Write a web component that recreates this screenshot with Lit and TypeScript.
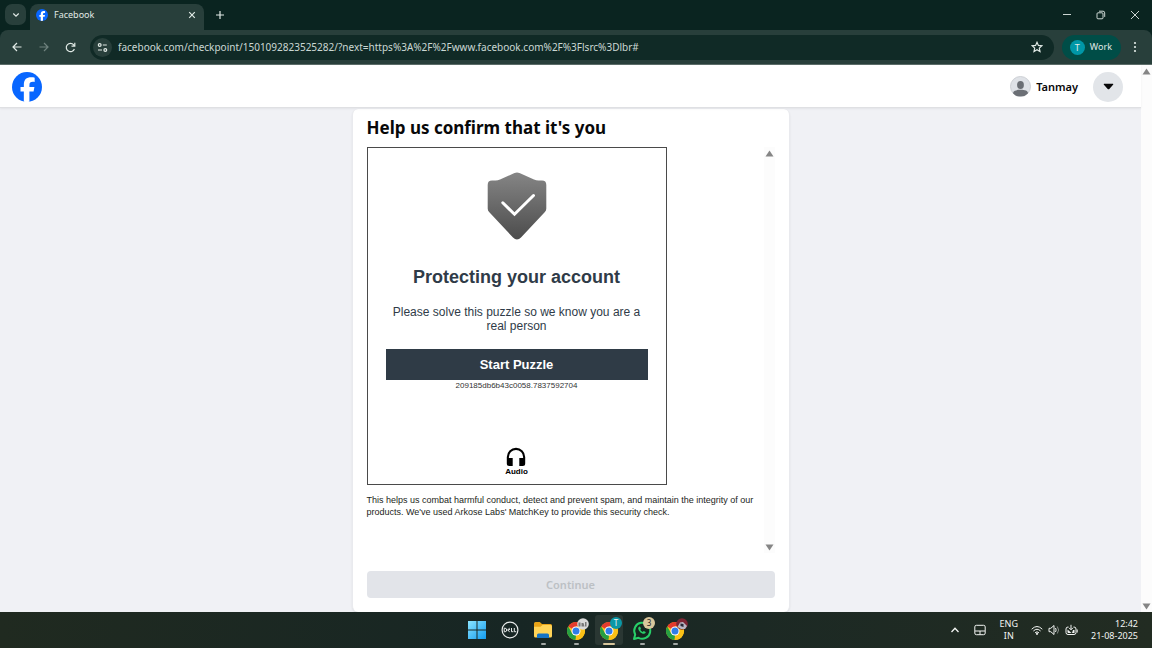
import { LitElement, html, svg, css } from "lit";
import { customElement } from "lit/decorators.js";

const fbMark = (cls: string) => html`
  <svg class=${cls} viewBox="0 0 36 36" aria-hidden="true">
    <circle cx="18" cy="18" r="18" fill="#0866ff" />
    <path
      fill="#fff"
      d="M14.2 35.6V23.5h-4v-5.6h4v-2.4c0-6.3 2.9-9.2 9-9.2 1.2 0 3.200.2 4 .46v5.100c-.4-.05-1.200-.07-2.100-.07-3 0-4.200 1.150-4.200 4.100v2h6l-1.030 5.610h-4.970v12.100c-2.400.5-4.700.400-6.700 0z"
    />
  </svg>
`;

const chromeMark = () => svg`
  <circle cx="10" cy="11" r="9" fill="#fbc116" />
  <path d="M10 11 2.2 6.500A9 9 0 0 1 17.800 6.500H10z" fill="#e33b2e" />
  <path d="M2.200 6.500 6.100 13.250 10 15.500 9.500 20A9 9 0 0 1 2.200 6.500z" fill="#269f42" />
  <path d="M10 6.500h7.800A9 9 0 0 1 9.500 20L13.900 13z" fill="#fbc116" />
  <circle cx="10" cy="11" r="4.500" fill="#fff" />
  <circle cx="10" cy="11" r="3.500" fill="#2f7de9" />
`;

@customElement("browser-chrome")
export class BrowserChrome extends LitElement {
  static styles = css`
    :host {
      display: block;
      background: #0a2420;
      color: #e1eae6;
      font: 10px/16px "Noto Sans", sans-serif;
    }
    button {
      border: 0;
      padding: 0;
      background: none;
      color: inherit;
      font: inherit;
      display: flex;
      align-items: center;
      justify-content: center;
    }
    svg {
      display: block;
      fill: none;
      stroke: currentColor;
      stroke-width: 1.2;
    }
    .strip {
      display: flex;
      align-items: flex-end;
      height: 30px;
    }
    .search {
      width: 21px;
      height: 21px;
      margin: 0 4px 5px 5px;
      border-radius: 7px;
      background: #283f3b;
    }
    .tab {
      display: flex;
      align-items: center;
      width: 174px;
      height: 26px;
      box-sizing: border-box;
      padding: 0 8px 4px 6px;
      border-radius: 8px 8px 0 0;
      background: #283f3b;
      font-size: 9px;
    }
    .favicon {
      width: 12px;
      height: 12px;
      margin-right: 6px;
      stroke: none;
    }
    .name {
      flex: 1;
    }
    .plus {
      width: 31px;
      height: 30px;
    }
    .window {
      display: flex;
      margin-left: auto;
    }
    .window button {
      width: 34px;
      height: 30px;
    }
    .window svg {
      stroke-width: 0.9;
    }
    .bar {
      display: flex;
      align-items: center;
      height: 35px;
      box-sizing: border-box;
      padding: 0 3px;
      border-bottom: 1px solid #5c6d69;
      border-radius: 8px 8px 0 0;
      background: #283f3b;
    }
    .nav {
      width: 27px;
      height: 26px;
    }
    .dim {
      color: #6f827e;
    }
    .address {
      flex: 1;
      display: flex;
      align-items: center;
      height: 25px;
      margin: 0 8px 0 6px;
      padding: 0 11px 0 3px;
      border-radius: 13px;
      background: #102a26;
    }
    .tune {
      width: 19px;
      height: 19px;
      margin-right: 6px;
      border-radius: 50%;
      background: #283f3b;
    }
    .url {
      flex: 1;
      min-width: 0;
      border: 0;
      padding: 0;
      outline: 0;
      background: none;
      color: #cbd8d4;
      font: 10px/16px "Noto Sans", sans-serif;
    }
    .profile {
      height: 25px;
      padding: 0 9px 0 8px;
      gap: 5px;
      border-radius: 13px;
      background: #004d47;
      font-size: 9px;
    }
    .initial {
      width: 15px;
      height: 15px;
      border-radius: 50%;
      background: #0097a7;
      font: 9px/15px "Noto Sans", sans-serif;
    }
    .more {
      width: 28px;
      height: 25px;
    }
  `;

  render() {
    return html`
      <div class="strip">
        <button class="search" aria-label="Search tabs">
          <svg width="8" height="8" viewBox="0 0 8 8"><path d="M1.300 2.500 4 5.200 6.700 2.500" /></svg>
        </button>
        <div class="tab">
          ${fbMark("favicon")}
          <span class="name">Facebook</span>
          <button aria-label="Close tab">
            <svg width="8" height="8" viewBox="0 0 8 8"><path d="m1.200 1.200 5.600 5.600m0-5.600L1.200 6.800" /></svg>
          </button>
        </div>
        <button class="plus" aria-label="New tab">
          <svg width="10" height="10" viewBox="0 0 10 10"><path d="M5 1v8M1 5h8" /></svg>
        </button>
        <div class="window">
          <button aria-label="Minimise">
            <svg width="10" height="10" viewBox="0 0 10 10"><path d="M1 4.500h8" /></svg>
          </button>
          <button aria-label="Restore">
            <svg width="10" height="10" viewBox="0 0 10 10">
              <rect x="1" y="2.800" width="6" height="6" rx="1" />
              <path d="M3 1.200h4a1.700 1.700 0 0 1 1.700 1.700v4" />
            </svg>
          </button>
          <button aria-label="Close">
            <svg width="10" height="10" viewBox="0 0 10 10"><path d="m1 1 8 8m0-8L1 9" /></svg>
          </button>
        </div>
      </div>
      <div class="bar">
        <button class="nav" aria-label="Back">
          <svg width="10" height="10" viewBox="0 0 10 10"><path d="M9.500 5H1.200M5 1 1 5l4 4" /></svg>
        </button>
        <button class="nav dim" aria-label="Forward">
          <svg width="10" height="10" viewBox="0 0 10 10"><path d="M.5 5h8.300M5 1l4 4-4 4" /></svg>
        </button>
        <button class="nav" aria-label="Reload">
          <svg width="11" height="11" viewBox="0 0 11 11">
            <path d="M9.400 7A4.200 4.200 0 1 1 8.700 2.800L9.600 3.800M9.800.8v3.300H6.500" />
          </svg>
        </button>
        <div class="address">
          <button class="tune" aria-label="View site information">
            <svg width="11" height="11" viewBox="0 0 11 11">
              <circle cx="2.700" cy="3" r="1.400" />
              <path d="M5.800 3h4M1 8h4" />
              <circle cx="8.300" cy="8" r="1.400" />
            </svg>
          </button>
          <input
            class="url"
            type="text"
            aria-label="Address"
            value="facebook.com/checkpoint/1501092823525282/?next=https%3A%2F%2Fwww.facebook.com%2F%3Flsrc%3Dlbr#"
          />
          <button aria-label="Bookmark this tab">
            <svg width="12" height="12" viewBox="0 0 12 12">
              <path d="m6 1.300 1.400 3.100 3.400.4-2.500 2.300.7 3.400-3-1.700-3 1.700.7-3.400-2.500-2.300 3.400-.4z" />
            </svg>
          </button>
        </div>
        <button class="profile"><span class="initial">T</span>Work</button>
        <button class="more" aria-label="Menu">
          <svg width="4" height="12" viewBox="0 0 4 12">
            <g fill="currentColor" stroke="none">
              <circle cx="2" cy="2" r="1.100" />
              <circle cx="2" cy="6" r="1.100" />
              <circle cx="2" cy="10" r="1.100" />
            </g>
          </svg>
        </button>
      </div>
    `;
  }
}

@customElement("scroll-track")
export class ScrollTrack extends LitElement {
  static styles = css`
    :host {
      display: flex;
      flex-direction: column;
      justify-content: space-between;
      align-items: center;
      flex: none;
      width: 11px;
      box-sizing: border-box;
      padding: 3px 0 2px;
      background: #fcfcfc;
    }
    svg {
      display: block;
      fill: #858585;
    }
  `;
  render() {
    return html`
      <svg width="9" height="7" viewBox="0 0 9 7"><path d="M4.500.5 8.500 6.500h-8z" /></svg>
      <svg width="9" height="7" viewBox="0 0 9 7"><path d="M.5.5h8l-4 6z" /></svg>
    `;
  }
}

@customElement("checkpoint-page")
export class CheckpointPage extends LitElement {
  static styles = css`
    :host {
      display: flex;
      background: #f0f1f5;
      font-family: "Noto Sans", sans-serif;
    }
    .page {
      flex: 1;
      display: flex;
      flex-direction: column;
      align-items: center;
    }
    header {
      align-self: stretch;
      display: flex;
      align-items: center;
      justify-content: space-between;
      height: 43px;
      box-sizing: border-box;
      padding: 1px 18px 0 12px;
      border-bottom: 1px solid #dfe0e3;
      background: #fff;
      box-shadow: 0 1px 2px rgba(0, 0, 0, 0.06);
      z-index: 1;
    }
    .logo {
      display: block;
      width: 30px;
      height: 30px;
    }
    .user {
      display: flex;
      align-items: center;
      color: #080809;
      font: 600 11px/16px "Noto Sans", sans-serif;
    }
    .avatar {
      width: 21px;
      height: 21px;
      margin-right: 5px;
    }
    .account {
      display: flex;
      align-items: center;
      justify-content: center;
      width: 30px;
      height: 30px;
      margin-left: 15px;
      padding: 0;
      border: 0;
      border-radius: 50%;
      background: #e2e5e9;
    }
    .card {
      flex: 1;
      display: flex;
      flex-direction: column;
      width: 438px;
      max-width: 100%;
      box-sizing: border-box;
      margin-top: 1px;
      padding: 7px 14px 14px;
      border: 1px solid #e9eaee;
      border-width: 0 1px;
      border-radius: 6px;
      background: #fff;
      box-shadow: 0 1px 2px rgba(0, 0, 0, 0.08);
    }
    h1 {
      margin: 0;
      color: #080809;
      font: 700 17px/24px "Noto Sans", sans-serif;
    }
    .scroller {
      flex: 1;
      display: flex;
      justify-content: space-between;
      margin: 7px 0 18px;
      font-family: "Liberation Sans", sans-serif;
    }
    .challenge {
      display: flex;
      flex-direction: column;
      align-items: center;
      width: 300px;
      height: 338px;
      box-sizing: border-box;
      padding: 24px 18px 7px;
      border: 1px solid #4a4a4a;
      color: #2f3b48;
      text-align: center;
    }
    .shield {
      display: block;
      width: 60px;
      height: 68px;
    }
    h2 {
      margin: 25px 0 0;
      font: 700 18px/24px "Liberation Sans", sans-serif;
    }
    .lead {
      margin: 16px 0;
      font-size: 12px;
      line-height: 14px;
    }
    .start {
      align-self: stretch;
      height: 31px;
      padding: 0;
      border: 0;
      background: #2f3b46;
      color: #fff;
      font: 700 13px/16px "Liberation Sans", sans-serif;
    }
    .session {
      color: #333;
      font-size: 8px;
      line-height: 11px;
    }
    .audio {
      display: flex;
      flex-direction: column;
      align-items: center;
      margin-top: auto;
      padding: 0;
      border: 0;
      background: none;
      color: #000;
      font: 700 8px/10px "Liberation Sans", sans-serif;
    }
    .note {
      margin: 9px 0 0;
      color: #1c1e21;
      font-size: 9px;
      line-height: 12px;
    }
    .continue {
      height: 27px;
      padding: 0;
      border: 0;
      border-radius: 4px;
      background: #e2e4e9;
      color: #bcc0c4;
      font: 600 11px/16px "Noto Sans", sans-serif;
    }
  `;

  render() {
    return html`
      <div class="page">
        <header>
          <a href="#" aria-label="Facebook">${fbMark("logo")}</a>
          <div class="user">
            <svg class="avatar" viewBox="0 0 21 21" aria-hidden="true">
              <clipPath id="round"><circle cx="10.500" cy="10.500" r="10.200" /></clipPath>
              <circle cx="10.500" cy="10.500" r="10" fill="#dfe2e7" stroke="#cdd0d5" />
              <g clip-path="url(#round)" fill="#6b6f75">
                <ellipse cx="10.500" cy="9" rx="3.400" ry="3.900" />
                <path d="M3 17.500c0-2.800 3-3.700 7.500-3.700s7.500.9 7.500 3.700l-3 3h-9z" />
              </g>
            </svg>
            Tanmay
            <button class="account" aria-label="Account">
              <svg width="11" height="7" viewBox="0 0 11 7">
                <path d="M1 .8h9q.6.5.1 1L6.300 5.900q-.8.7-1.600 0L.9 1.800Q.4 1.300 1 .8z" fill="#080809" />
              </svg>
            </button>
          </div>
        </header>
        <main class="card">
          <h1>Help us confirm that it's you</h1>
          <div class="scroller">
            <div>
              <section class="challenge">
                <svg class="shield" viewBox="0 0 60 68" aria-hidden="true">
                  <linearGradient id="steel" x1="0" y1="0" x2="0" y2="1">
                    <stop offset="0" stop-color="#858585" />
                    <stop offset="1" stop-color="#4c4c4c" />
                  </linearGradient>
                  <path
                    fill="url(#steel)"
                    d="M27.500 1.100q2.500-1.100 5 0L47 7.600q2.200 1 4.500 1H55q4.300 0 4.300 4.300v23.500q0 2-1.400 3.600L34 65.500q-4 4.200-8 0L2.100 40Q.7 38.400.7 36.400V12.900Q.7 8.600 5 8.600h3.500q2.300 0 4.500-1z"
                  />
                  <path
                    d="M15.800 30.800 27.500 42.200 46.500 23.500"
                    fill="none"
                    stroke="#fff"
                    stroke-width="3"
                    stroke-linecap="round"
                  />
                </svg>
                <h2>Protecting your account</h2>
                <p class="lead">Please solve this puzzle so we know you are a real person</p>
                <button class="start">Start Puzzle</button>
                <div class="session">209185db6b43c0058.7837592704</div>
                <button class="audio">
                  <svg width="20" height="20" viewBox="0 0 20 20">
                    <path
                      d="M10 .8A9.200 9.200 0 0 0 .8 10v6.500q0 2.500 2.500 2.500h3.400v-8H2.900v-1a7.100 7.100 0 0 1 14.200 0v1h-3.800v8h3.400q2.500 0 2.500-2.500V10A9.200 9.200 0 0 0 10 .8z"
                    />
                  </svg>
                  Audio
                </button>
              </section>
              <p class="note">
                This helps us combat harmful conduct, detect and prevent spam, and maintain the
                integrity of our products. We've used Arkose Labs' MatchKey to provide this security
                check.
              </p>
            </div>
            <scroll-track></scroll-track>
          </div>
          <button class="continue" disabled>Continue</button>
        </main>
      </div>
      <scroll-track></scroll-track>
    `;
  }
}

@customElement("task-bar")
export class TaskBar extends LitElement {
  static styles = css`
    :host {
      display: grid;
      grid-template-columns: 1fr auto 1fr;
      align-items: center;
      height: 36px;
      background: linear-gradient(90deg, #202a20, #172624 45%, #1c2924 65%, #222c22);
      color: #f3f5f3;
      font: 9px/12px "Noto Sans", sans-serif;
    }
    button {
      display: flex;
      align-items: center;
      justify-content: center;
      border: 0;
      padding: 0;
      background: none;
      color: inherit;
      font: inherit;
    }
    svg {
      display: block;
      overflow: visible;
    }
    .apps {
      grid-column: 2;
      display: flex;
      gap: 5px;
    }
    .app {
      position: relative;
      width: 28px;
      height: 30px;
      border-radius: 3px;
    }
    .active {
      background: #2a3733;
    }
    .running::after {
      content: "";
      position: absolute;
      left: 12px;
      bottom: 0;
      width: 5px;
      height: 2px;
      border-radius: 1px;
      background: #a3a8a6;
    }
    .active::after {
      left: 8px;
      width: 12px;
      background: #d8c69c;
    }
    .badge {
      position: absolute;
      right: 1px;
      top: 2px;
      width: 12px;
      height: 12px;
      border-radius: 50%;
      font-size: 8px;
      line-height: 12px;
      text-align: center;
    }
    .teal {
      background: #0b97a6;
    }
    .sand {
      background: #d8c69c;
      color: #222;
    }
    .tray {
      display: flex;
      align-items: center;
      justify-content: flex-end;
      padding-right: 14px;
    }
    .tray svg {
      fill: none;
      stroke: currentColor;
    }
    .keyboard {
      margin: 0 14px;
    }
    .status {
      gap: 5px;
      margin: 0 13px;
    }
    .clock {
      display: block;
      text-align: right;
    }
  `;

  render() {
    return html`
      <div class="apps">
        <button class="app" aria-label="Start">
          <svg width="18" height="18" viewBox="0 0 18 18">
            <linearGradient id="sky" x1="0" y1="0" x2="1" y2="1">
              <stop offset="0" stop-color="#8be4ff" />
              <stop offset="1" stop-color="#129cf0" />
            </linearGradient>
            <path fill="url(#sky)" d="M0 0h8.500v8.500H0zM9.500 0H18v8.500H9.500zM0 9.500h8.500V18H0zM9.500 9.500H18V18H9.500z" />
          </svg>
        </button>
        <button class="app" aria-label="Dell">
          <svg width="18" height="18" viewBox="0 0 18 18" fill="none" stroke="#e8ebea">
            <circle cx="9" cy="9" r="7.900" stroke-width="1.200" />
            <path d="M3.200 7.200v3.600h.9q1.600-.2 1.600-1.800T4.100 7.200zM8.700 7.200 6.500 9l2.200 1.800M7 9.500l2-1.300M10.500 7v3.700h1.800M13.300 7v3.700h1.900" />
          </svg>
        </button>
        <button class="app running" aria-label="File Explorer">
          <svg width="20" height="18" viewBox="0 0 20 18">
            <path d="M1 2.500Q1 1 2.500 1h4.300l2.200 2h8.500Q19 3 19 4.500V14H1z" fill="#e8a317" />
            <path d="M1 5.800h6.500L9.500 4H17.500Q19 4 19 5.500v9.500q0 1.500-1.500 1.500h-15Q1 16.500 1 15z" fill="#ffd458" />
            <path d="M4 17v-3q0-1.500 1.500-1.500h9q1.500 0 1.500 1.500v3z" fill="#1673c5" />
          </svg>
        </button>
        <button class="app running" aria-label="Chrome">
          <svg width="20" height="20" viewBox="0 0 20 20">
            ${chromeMark()}
            <circle cx="17" cy="4" r="5.800" fill="#d9d9d9" />
            <path d="M12.500 2.500h2v4h-2zM15.500 3h2l1 3.500h-3zM19 2h1.500v4.500H19z" fill="#777" />
          </svg>
        </button>
        <button class="app running active" aria-label="Chrome, Work">
          <svg width="20" height="20" viewBox="0 0 20 20">${chromeMark()}</svg>
          <span class="badge teal">T</span>
        </button>
        <button class="app running" aria-label="WhatsApp">
          <svg width="20" height="20" viewBox="0 0 20 20">
            <path
              d="M2 19 3.200 14.500A8 8 0 1 1 6.500 17.800z"
              fill="#14271f"
              stroke="#28cf69"
              stroke-width="2"
              stroke-linejoin="round"
            />
            <path
              d="M7 6.700c-1.400.9-1 3 .9 5s4.300 2.900 5.600 1.300q.6-.9-.3-1.300l-1.500-.7-1 .9Q8.800 11 8.300 9.700l.7-.9-.7-1.700Q7.800 6.300 7 6.700z"
              fill="#28cf69"
            />
          </svg>
          <span class="badge sand">3</span>
        </button>
        <button class="app running" aria-label="Chrome, personal">
          <svg width="20" height="20" viewBox="0 0 20 20">
            ${chromeMark()}
            <circle cx="17" cy="4" r="5.800" fill="#7d2634" />
            <path d="M12.500 7 15 2.500l3-.5 4 4-2 3h-4z" fill="#b9b8c4" />
            <path d="m15.500 3.500 3 .5v3l-3-1z" fill="#272938" />
          </svg>
        </button>
      </div>
      <div class="tray">
        <button aria-label="Show hidden icons">
          <svg width="10" height="10" viewBox="0 0 10 10" stroke-width="1.300"><path d="M1.500 7 5 3.300 8.500 7" /></svg>
        </button>
        <button class="keyboard" aria-label="Touch keyboard">
          <svg width="12" height="12" viewBox="0 0 12 12">
            <rect x=".8" y="1.300" width="10.400" height="9.400" rx="1.600" />
            <path d="M1 7h10M6 7v3.500" />
          </svg>
        </button>
        <button>ENG<br />IN</button>
        <button class="status" aria-label="Network, sound, battery">
          <svg width="12" height="12" viewBox="0 0 12 12">
            <path d="M.7 5.200Q6-.2 11.300 5.200M2.400 7Q6 3.500 9.600 7M4.100 8.700Q6 7 7.900 8.700" />
            <circle cx="6" cy="9.800" r=".7" fill="currentColor" />
          </svg>
          <svg width="12" height="12" viewBox="0 0 12 12">
            <path d="M1 4.300h1.800L6 1.500v9L2.800 7.700H1z" />
            <path d="M7.500 4q1.300 2 0 4" />
            <path d="M9.300 2.500q2.600 3.500 0 7" opacity=".5" />
          </svg>
          <svg width="13" height="12" viewBox="0 0 13 12">
            <path d="M3.500 3H3Q1 3 1 5v3.500q0 2 2 2h6q2 0 2-2V5q0-2-2-2h-.5M12.200 5.500v3" />
            <path d="M2.500 5.500 6.500 9H3.500q-1 0-1-1zM8 6h1.500v3H7z" fill="currentColor" stroke="none" />
            <path d="M6 .8v4.700M4 3.800l2 2 2-2" />
          </svg>
        </button>
        <button class="clock">12:42<br />21-08-2025</button>
      </div>
    `;
  }
}

@customElement("app-root")
export class AppRoot extends LitElement {
  static styles = css`
    :host {
      display: flex;
      flex-direction: column;
      min-height: 100vh;
    }
    .content {
      flex: 1;
    }
  `;
  render() {
    return html`
      <browser-chrome></browser-chrome>
      <checkpoint-page class="content"></checkpoint-page>
      <task-bar></task-bar>
    `;
  }
}
